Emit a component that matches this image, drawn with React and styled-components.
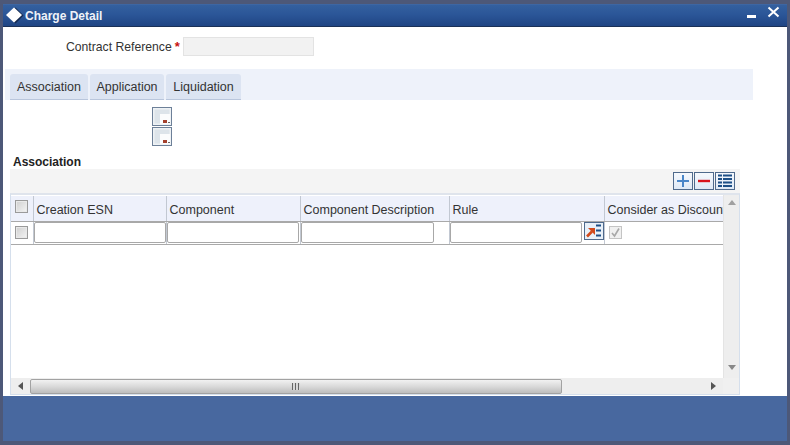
import React from 'react';
import styled, { createGlobalStyle } from 'styled-components';

const Global = createGlobalStyle`
  html, body {
    margin: 0;
    padding: 0;
    background: #4d5878;
  }
  * { box-sizing: border-box; }
`;

const Frame = styled.div`
  width: 790px;
  height: 445px;
  padding: 4px 3px 4px 3px;
  display: flex;
  flex-direction: column;
  overflow: hidden;
  background: #4d5878;
  font-family: "Liberation Sans", Arial, sans-serif;
  font-size: 12px;
  color: #222;
`;

const TitleBar = styled.div`
  height: 23px;
  flex: none;
  display: flex;
  align-items: center;
  padding: 0 1px 0 3px;
  background: linear-gradient(#34609f, #2b5698 45%, #204584);
  border-top: 1px solid #3d66a3;
  border-bottom: 1px solid #1b3157;
  color: #fff;
`;

const Title = styled.span`
  margin-left: 1px;
  font-weight: bold;
  font-size: 12px;
  color: #eef2f8;
  flex: 1;
`;

const Controls = styled.svg`
  margin-top: -4px;
`;

const Body = styled.div`
  height: 369px;
  flex: none;
  background: #fff;
  display: flex;
  flex-direction: column;
  align-items: flex-start;
`;

const Footer = styled.div`
  flex: 1;
  background: #48689f;
`;

const FieldRow = styled.div`
  height: 19px;
  margin: 10px 0 13px 63px;
  display: flex;
  align-items: center;
`;

const Label = styled.label`
  font-size: 12.2px;
  color: #333;
`;

const Star = styled.span`
  color: #c81010;
  font-weight: bold;
  margin: 0 3px 0 3px;
  font-size: 13px;
`;

const ReadOnly = styled.div`
  width: 131px;
  height: 19px;
  background: #f2f2f2;
  border: 1px solid #e3e3e3;
`;

const TabBand = styled.div`
  width: 748px;
  height: 31px;
  margin-left: 2px;
  padding: 5px 0 0 5px;
  background: #eef2fa;
  display: flex;
  gap: 2px;
`;

const Tab = styled.div`
  width: ${(p) => p.$w}px;
  height: 26px;
  background: #dce4f2;
  border-radius: 3px 3px 0 0;
  border-bottom: 1px solid #b9c6dc;
  font-size: 12.5px;
  color: #333;
  display: flex;
  align-items: center;
  justify-content: center;
`;

const SmallIcons = styled.div`
  margin: 7px 0 0 149px;
  display: flex;
  flex-direction: column;
  gap: 1px;
`;

const Heading = styled.div`
  height: 15px;
  margin: 8px 0 0 10px;
  font-weight: bold;
  font-size: 12px;
  line-height: 16px;
  color: #222;
`;

const Grid = styled.div`
  width: 730px;
  margin-left: 7px;
`;

const Toolbar = styled.div`
  height: 24px;
  background: #f4f4f4;
  display: flex;
  justify-content: flex-end;
  align-items: flex-start;
  gap: 1px;
  padding: 3px 5px 0 0;
`;

const ToolButton = styled.div`
  width: 20px;
  height: 18px;
  border: 1px solid #4f6a8c;
  background: linear-gradient(#f6f9fd, #dfe9f5);
  display: flex;
  align-items: center;
  justify-content: center;
`;

const TableWrap = styled.div`
  height: 202px;
  border: 1px solid #d5dfec;
  border-top: 2px solid #dfe4ec;
  display: grid;
  grid-template-columns: 712px 16px;
  grid-template-rows: 183px 16px;
`;

const Viewport = styled.div`
  overflow: hidden;
  padding-top: 1px;
`;

const Table = styled.table`
  border-collapse: collapse;
  table-layout: fixed;
  width: 712px;
`;

const Th = styled.th`
  height: 25px;
  padding: ${(p) => (p.$check ? '0 0 3px 0' : '3px 0 0 3px')};
  background: #eef1fb;
  border-right: 1px solid #c2c8d2;
  border-bottom: 1px solid #a9a9a9;
  font-weight: normal;
  font-size: 12.5px;
  color: #333;
  text-align: left;
  white-space: nowrap;
  overflow: hidden;
  &:last-child { border-right: 0; }
`;

const Td = styled.td`
  height: 23px;
  padding: 0 0 1px 0;
  border-right: 1px solid #c2c8d2;
  border-bottom: 1px solid #a9a9a9;
  &:last-child { border-right: 0; }
`;

const CheckCell = styled.div`
  display: flex;
  justify-content: center;
`;

const Check = styled.div`
  width: 13px;
  height: 13px;
  border: 1px solid #9a9a9a;
  background: linear-gradient(135deg, #cfcfcf, #f4f4f4);
  box-shadow: inset 0 0 0 1px #e9e9e9;
`;

const Disabled = styled.div`
  width: 13px;
  height: 13px;
  margin-left: 4px;
  border: 1px solid #c4c4c4;
  background: #f0f0f0;
  display: flex;
  align-items: center;
  justify-content: center;
`;

const TextInput = styled.div`
  width: ${(p) => p.$w}px;
  height: 21px;
  background: #fff;
  border: 1px solid #a8a8a8;
  border-radius: 2px;
`;

const RuleCell = styled.div`
  display: flex;
  align-items: flex-start;
`;

const LovButton = styled(ToolButton)`
  margin-left: 2px;
  background: #e8f0f8;
`;

const VScroll = styled.div`
  background: #eeeeee;
  border-left: 1px solid #e4e4e4;
  display: flex;
  flex-direction: column;
  justify-content: space-between;
  align-items: center;
  padding: 5px 0 8px;
`;

const HScroll = styled.div`
  background: #eeeeee;
  display: flex;
  align-items: center;
`;

const ArrowBox = styled.div`
  width: ${(p) => p.$w}px;
  height: 16px;
  flex: none;
  display: flex;
  align-items: center;
  justify-content: center;
`;

const Thumb = styled.div`
  width: 532px;
  height: 15px;
  flex: none;
  border: 1px solid #a2a2a2;
  border-radius: 2px;
  background: linear-gradient(#f1f1f1, #dcdcdc 45%, #bdbdbd);
  display: flex;
  align-items: center;
  justify-content: center;
`;

const Grip = styled.div`
  width: 8px;
  height: 7px;
  background: repeating-linear-gradient(90deg, #666 0 1px, #d8d8d8 1px 3px);
`;

const Track = styled.div`
  flex: 1;
`;

const Corner = styled.div`
  background: #f0f0f0;
`;

const Tri = ({ dir, color = '#555' }) => {
  const pts = {
    left: '5,0 5,8 0,4',
    right: '0,0 0,8 5,4',
    up: '0,5 8,5 4,0',
    down: '0,0 8,0 4,5',
  }[dir];
  const horizontal = dir === 'left' || dir === 'right';
  return (
    <svg width={horizontal ? 5 : 8} height={horizontal ? 8 : 5}>
      <polygon points={pts} fill={color} />
    </svg>
  );
};

const Diamond = () => (
  <svg width="18" height="18" viewBox="0 0 18 18">
    <polygon points="9.5,0.5 17.5,8.5 9.5,16.5 1.5,8.5" fill="#14294f" />
    <polygon points="8,0.5 16,8 8,15.5 0,8" fill="#fff" />
  </svg>
);

const WindowControls = () => (
  <Controls width="40" height="16" viewBox="0 0 40 16">
    <rect x="1" y="9" width="9" height="3" fill="#fff" />
    <path d="M22.5 1.5 L32.5 10.5 M32.5 1.5 L22.5 10.5" stroke="#fff" strokeWidth="2" />
  </Controls>
);

const Sheet = () => (
  <svg width="20" height="19" viewBox="0 0 20 19">
    <rect x="0.5" y="0.5" width="19" height="18" fill="#eef2f5" stroke="#6d8098" />
    <path d="M2.5 16.5 V2.5 H17.5 V7 H8 V16.5 Z" fill="#dde4ea" />
    <rect x="8" y="7" width="10" height="10" fill="#fbfcfd" />
    <rect x="11" y="13" width="4" height="3" fill="#a4412d" />
    <rect x="16" y="15" width="2" height="1" fill="#666" />
  </svg>
);

const Plus = () => (
  <svg width="14" height="14" viewBox="0 0 14 14">
    <path d="M7 1 V13 M1 7 H13" stroke="#4a86c8" strokeWidth="2" />
  </svg>
);

const Minus = () => (
  <svg width="14" height="14" viewBox="0 0 14 14">
    <path d="M1 7 H13" stroke="#d8131b" strokeWidth="2.4" />
  </svg>
);

const ListIcon = () => (
  <svg width="16" height="14" viewBox="0 0 16 14">
    <path
      d="M1 1.5 H15 M1 5 H15 M1 8.5 H15 M1 12 H15"
      stroke="#1d4f86"
      strokeWidth="2"
    />
    <path d="M5.5 0 V14" stroke="#eef3f9" strokeWidth="1" />
  </svg>
);

const RuleIcon = () => (
  <svg width="16" height="14" viewBox="0 0 16 14">
    <path d="M1 12.5 L6 7.5" stroke="#d14a1c" strokeWidth="2.6" />
    <polygon points="2,4 9,4 9,11" fill="#d14a1c" />
    <path d="M10 1.5 H15 M10 6.5 H15 M10 11.5 H15" stroke="#1d4f86" strokeWidth="2" />
  </svg>
);

const Tick = () => (
  <svg width="11" height="11" viewBox="0 0 11 11">
    <path d="M2 6 L4.5 9 L9 1.5" fill="none" stroke="#a8a8a8" strokeWidth="1.6" />
  </svg>
);

const columns = [
  { name: 'Creation ESN', w: 133 },
  { name: 'Component', w: 134 },
  { name: 'Component Description', w: 149 },
  { name: 'Rule', w: 155 },
  { name: 'Consider as Discount', w: 119 },
];

const App = () => (
  <Frame>
    <Global />
    <TitleBar>
      <Diamond />
      <Title>Charge Detail</Title>
      <WindowControls />
    </TitleBar>
    <Body>
      <FieldRow>
        <Label>Contract Reference</Label>
        <Star>*</Star>
        <ReadOnly />
      </FieldRow>
      <TabBand>
        <Tab $w={78}>Association</Tab>
        <Tab $w={74}>Application</Tab>
        <Tab $w={75}>Liquidation</Tab>
      </TabBand>
      <SmallIcons>
        <Sheet />
        <Sheet />
      </SmallIcons>
      <Heading>Association</Heading>
      <Grid>
        <Toolbar>
          <ToolButton><Plus /></ToolButton>
          <ToolButton><Minus /></ToolButton>
          <ToolButton><ListIcon /></ToolButton>
        </Toolbar>
        <TableWrap>
          <Viewport>
            <Table>
              <colgroup>
                <col style={{ width: 22 }} />
                {columns.map((c) => <col key={c.name} style={{ width: c.w }} />)}
              </colgroup>
              <thead>
                <tr>
                  <Th $check><CheckCell><Check /></CheckCell></Th>
                  {columns.map((c) => <Th key={c.name}>{c.name}</Th>)}
                </tr>
              </thead>
              <tbody>
                <tr>
                  <Td><CheckCell><Check /></CheckCell></Td>
                  <Td><TextInput $w={132} /></Td>
                  <Td><TextInput $w={132} /></Td>
                  <Td><TextInput $w={133} /></Td>
                  <Td>
                    <RuleCell>
                      <TextInput $w={132} />
                      <LovButton><RuleIcon /></LovButton>
                    </RuleCell>
                  </Td>
                  <Td><Disabled><Tick /></Disabled></Td>
                </tr>
              </tbody>
            </Table>
          </Viewport>
          <VScroll>
            <Tri dir="up" color="#a0a0a0" />
            <Tri dir="down" color="#888" />
          </VScroll>
          <HScroll>
            <ArrowBox $w={19}><Tri dir="left" /></ArrowBox>
            <Thumb><Grip /></Thumb>
            <Track />
            <ArrowBox $w={20}><Tri dir="right" /></ArrowBox>
          </HScroll>
          <Corner />
        </TableWrap>
      </Grid>
    </Body>
    <Footer />
  </Frame>
);

export default App;
